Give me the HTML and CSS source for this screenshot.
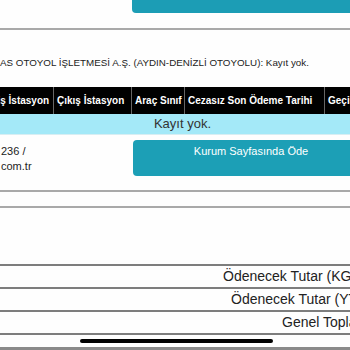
FILE: index.html
```html
<!DOCTYPE html>
<html lang="tr">
<head>
<meta charset="utf-8">
<link rel="stylesheet" href="styles.css">
</head>
<body>
<div class="page">
  <div class="top-row"><div class="top-btn"></div></div>
  <div class="rule"></div>
  <p class="status">AS OTOYOL İŞLETMESİ A.Ş. (AYDIN-DENİZLİ OTOYOLU): Kayıt yok.</p>
  <div class="table">
    <div class="thead">
      <div class="th">Giriş İstasyon</div>
      <div class="th">Çıkış İstasyon</div>
      <div class="th">Araç Sınıf</div>
      <div class="th">Cezasız Son Ödeme Tarihi</div>
      <div class="th">Geçiş Tarihi</div>
    </div>
    <div class="empty">Kayıt yok.</div>
  </div>
  <div class="contact-row">
    <div class="contact">236 /<br>com.tr</div>
    <div class="pay-btn">Kurum Sayfasında Öde</div>
  </div>
  <div class="rule r1"></div>
  <div class="rule r2"></div>
  <div class="totals">
    <div class="trow"><span class="tl t1">Ödenecek Tutar (KGM):</span></div>
    <div class="trow"><span class="tl t2">Ödenecek Tutar (YTL):</span></div>
    <div class="trow"><span class="tl t3">Genel Toplam:</span></div>
  </div>
  <div class="bottom-band"></div>
</div>
<div class="home-bar"></div>
</body>
</html>
```
FILE: styles.css
```css
html, body {
  margin: 0;
  padding: 0;
  background: #fefefe;
  overflow: hidden;
  width: 350px;
  height: 350px;
}
body {
  font-family: "Liberation Sans", Arial, Helvetica, sans-serif;
  color: #222;
  position: relative;
}
.page {
  width: 350px;
  overflow: hidden;
}
.top-row {
  height: 13px;
  display: flex;
}
.top-btn {
  margin-left: 132px;
  width: 240px;
  flex: none;
  height: 13px;
  background: #1c9db5;
  border-bottom-left-radius: 4px;
}
.rule {
  height: 2px;
  background: #a9a9a9;
  margin-top: 15px;
  width: 350px;
}
.status {
  margin: 26px 0 0 0;
  font-size: 9.8px;
  line-height: 14px;
  white-space: nowrap;
  color: #222;
}
.table {
  margin-top: 17px;
  margin-left: -20px;
  width: 420px;
}
.thead {
  display: grid;
  grid-template-columns: 74px 78px 53px 140px 75px;
  height: 27px;
  background: #000;
}
.th {
  color: #fff;
  font-weight: bold;
  font-size: 10px;
  line-height: 27px;
  padding-left: 3px;
  border-right: 1px solid #666;
  white-space: nowrap;
  overflow: hidden;
}
.empty {
  background: #a4e9f8;
  height: 20px;
  line-height: 20px;
  text-align: center;
  font-size: 13px;
  color: #333;
  width: 405px;
  border-bottom: 1px solid #d8eef3;
}
.contact-row {
  display: flex;
  margin-top: 5px;
}
.contact {
  width: 132px;
  flex: none;
  font-size: 11px;
  line-height: 15px;
  padding-top: 4px;
  padding-left: 1px;
  color: #222;
}
.pay-btn {
  flex: none;
  width: 236px;
  height: 36px;
  box-sizing: border-box;
  background: #1c9fb6;
  border-radius: 4px;
  color: #fff;
  font-size: 11px;
  text-align: center;
  padding-top: 5px;
}
.rule.r1 { margin-top: 14px; }
.rule.r2 { margin-top: 14px; }
.totals {
  margin-top: 56px;
  width: 350px;
}
.trow {
  height: 21px;
  border-top: 2px solid #7d7d7d;
  white-space: nowrap;
  font-size: 14px;
  line-height: 21px;
  color: #222;
}
.trow:last-child {
  border-bottom: 2px solid #7d7d7d;
}
.tl { display: inline-block; }
.t1 { margin-left: 223px; }
.t2 { margin-left: 231px; }
.t3 { margin-left: 282px; }
.bottom-band {
  margin-top: 12px;
  height: 3px;
  background: #8a8a8a;
}
.home-bar {
  position: absolute;
  left: 80px;
  top: 339px;
  width: 193px;
  height: 4px;
  border-radius: 2px;
  background: #000;
}
```
